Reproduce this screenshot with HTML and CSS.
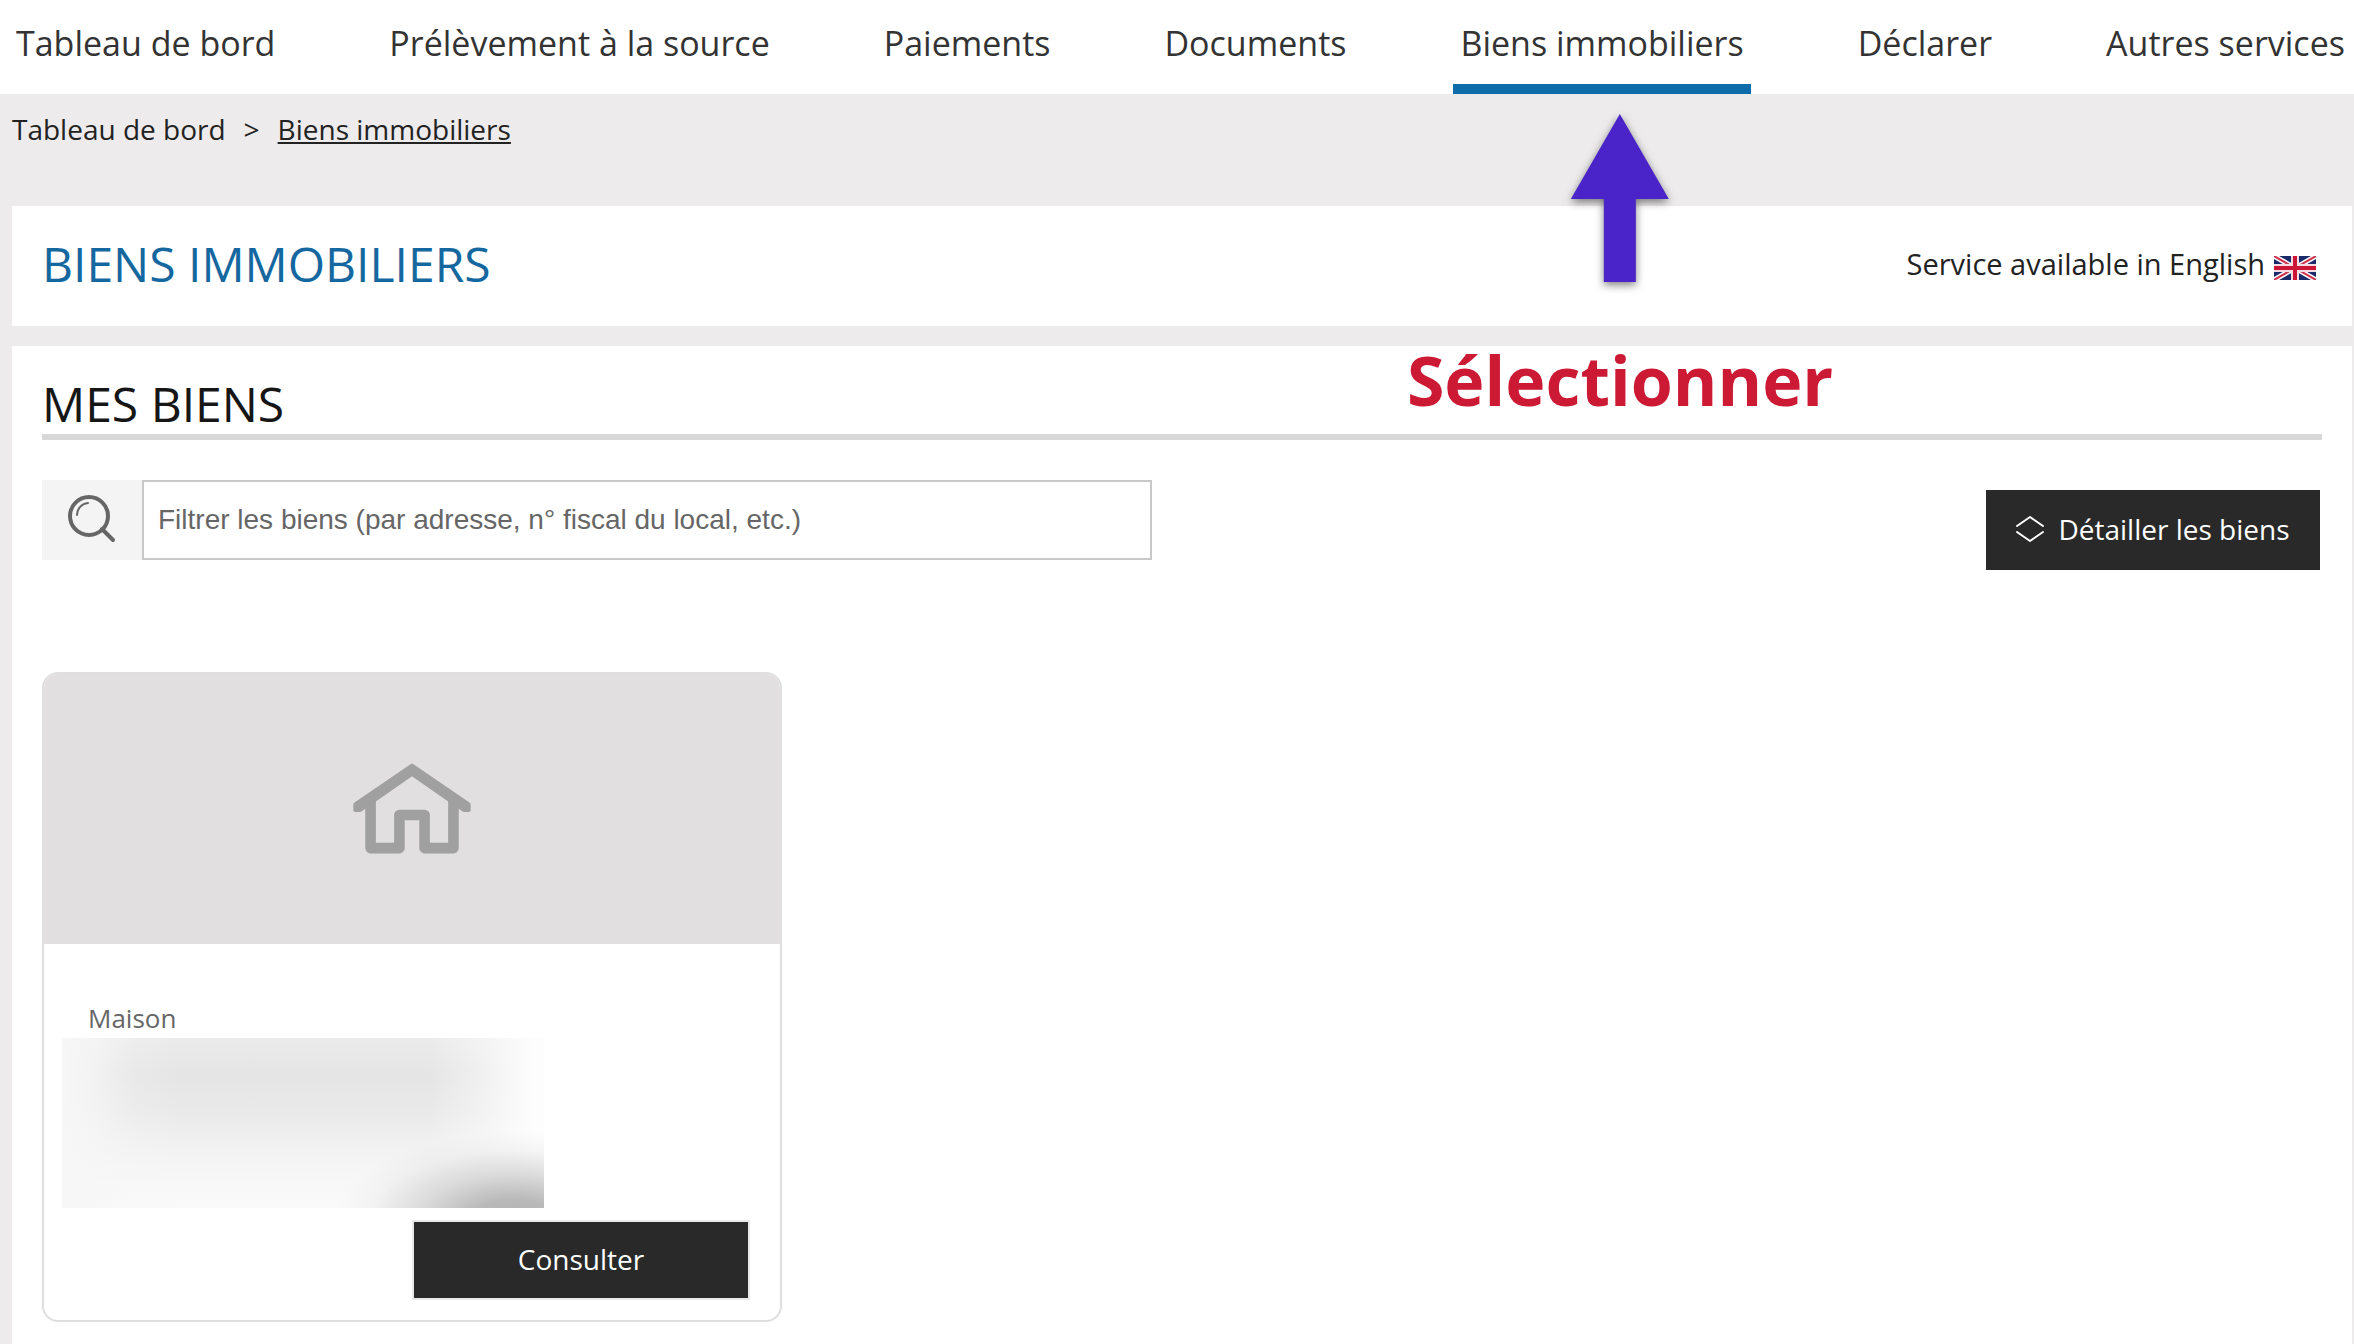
FILE: index.html
```html
<!DOCTYPE html>
<html lang="fr">
<head>
  <meta charset="UTF-8" />
  <meta name="viewport" content="width=device-width, initial-scale=1" />
  <title>Biens immobiliers</title>
  <link rel="stylesheet" href="styles.css">
</head>
<body>

  <nav class="main-nav" aria-label="Menu principal">
    <ul>
      <li><a href="#">Tableau de bord</a></li>
      <li><a href="#">Prélèvement à la source</a></li>
      <li><a href="#">Paiements</a></li>
      <li><a href="#">Documents</a></li>
      <li class="active">
        <a href="#" aria-current="page">Biens immobiliers</a>
        <!-- Aide : flèche vers l'onglet -->
        <div class="callout">
          <svg class="callout-arrow" viewBox="0 0 98 168" aria-hidden="true">
            <path d="M49 0L98 85H65V168H33V85H0Z" fill="#4a24c8" />
          </svg>
          <span class="callout-text">Sélectionner</span>
        </div>
      </li>
      <li><a href="#">Déclarer</a></li>
      <li><a href="#">Autres services</a></li>
    </ul>
  </nav>

  <nav class="breadcrumb" aria-label="Fil d'Ariane">
    <a href="#">Tableau de bord</a>
    <span>&gt;</span>
    <a href="#" class="current">Biens immobiliers</a>
  </nav>

  <main>
    <header class="panel page-header">
      <h1>BIENS IMMOBILIERS</h1>
      <a href="#" class="lang-link">
        Service available in English
        <svg class="flag" viewBox="0 0 42 24" aria-hidden="true">
          <rect width="42" height="24" fill="#1b2a6b" />
          <path d="M0 0L42 24M42 0L0 24" stroke="#fff" stroke-width="5" />
          <path d="M0 0L42 24M42 0L0 24" stroke="#d0324f" stroke-width="2" />
          <path d="M21 0V24M0 12H42" stroke="#f6dbe2" stroke-width="8" />
          <path d="M21 0V24M0 12H42" stroke="#cc1436" stroke-width="4" />
        </svg>
      </a>
    </header>

    <section class="panel properties">
      <h2>MES BIENS</h2>

      <div class="toolbar">
        <div class="search">
          <label for="filter" aria-label="Filtrer les biens">
            <svg class="search-icon" viewBox="0 0 48 48" fill="none" stroke="#666" stroke-linecap="round" aria-hidden="true">
              <circle cx="21" cy="20" r="19" stroke-width="4" />
              <path d="M34 33L45 44" stroke-width="4" />
              <path d="M9 19A12 12 0 0 1 20 7" stroke-width="2" />
            </svg>
          </label>
          <input type="text" id="filter" placeholder="Filtrer les biens (par adresse, n° fiscal du local, etc.)" />
        </div>
        <button type="button" class="btn btn-detail">
          <svg viewBox="0 0 28 26" fill="none" stroke="#fff" stroke-width="2" stroke-linecap="round" stroke-linejoin="round" aria-hidden="true">
            <path d="M1 10L14 1L27 10M1 16L14 25L27 16" />
          </svg>
          Détailler les biens
        </button>
      </div>

      <article class="card">
        <div class="card-image">
          <svg viewBox="68 68 356 274" aria-hidden="true">
            <g fill="none" stroke="#a0a0a0" stroke-width="32" stroke-linejoin="round">
              <path d="M121 165V323H208V223H284V323H371V165" />
            </g>
            <path d="M246 74L417 191V208H402L246 99L90 208H75V191Z" fill="#a0a0a0" stroke="#a0a0a0" stroke-width="12" stroke-linejoin="round" />
          </svg>
        </div>
        <div class="card-body">
          <p class="card-type">Maison</p>
          <div class="card-address"></div>
          <button type="button" class="btn btn-view">Consulter</button>
        </div>
      </article>
    </section>
  </main>

</body>
</html>
```
FILE: styles.css
```css
* {
  box-sizing: border-box;
}
body {
  margin: 0;
  min-height: 100vh;
  display: flex;
  flex-direction: column;
  background: #edebec;
  color: #222;
  font-family: "Open Sans", "Noto Sans", sans-serif;
  font-size: 28px;
  line-height: 40px;
}
a {
  color: inherit;
  text-decoration: none;
}
h1, h2 {
  margin: 0;
  font-size: 48px;
  font-weight: 400;
  line-height: 64px;
}

/* Menu principal */
.main-nav {
  background: #fff;
}
.main-nav ul {
  display: flex;
  justify-content: space-between;
  list-style: none;
  margin: 0;
  padding: 0 2px 0 9px;
}
.main-nav li {
  position: relative;
}
.main-nav a {
  display: block;
  height: 94px;
  padding: 19px 7px 0;
  border-bottom: 10px solid transparent;
  color: #333;
  font-size: 34px;
  line-height: 48px;
  white-space: nowrap;
}
.main-nav .active a {
  border-color: #0f6cab;
}

/* Aide */
.callout {
  position: absolute;
  top: 114px;
  left: 50%;
  margin-left: 18px;
  transform: translateX(-50%);
  display: flex;
  flex-direction: column;
  align-items: center;
  gap: 54px;
  pointer-events: none;
}
.callout-arrow {
  width: 98px;
  height: 168px;
  overflow: visible;
  filter: drop-shadow(0 3px 4px rgba(0,0,0,0.5));
}
.callout-text {
  color: #cc1a35;
  font-size: 68px;
  font-weight: 700;
  line-height: 88px;
  -webkit-text-stroke: 12px #fff;
  paint-order: stroke fill;
}

/* Fil d'Ariane */
.breadcrumb {
  display: flex;
  gap: 18px;
  padding: 15px 12px 57px;
}
.breadcrumb .current {
  text-decoration: underline;
}

/* Contenu */
main {
  flex: 1;
  display: flex;
  flex-direction: column;
  gap: 20px;
  padding: 0 2px 0 12px;
}
.panel {
  background: #fff;
  padding: 26px 30px 30px;
}
.page-header {
  display: flex;
  justify-content: space-between;
  align-items: center;
  padding-right: 36px;
}
.page-header h1 {
  color: #15689f;
}
.lang-link {
  display: flex;
  align-items: center;
  gap: 9px;
  font-size: 29px;
}
.flag {
  width: 42px;
  height: 24px;
  margin-top: 8px;
}
.properties {
  flex: 1;
  padding: 26px 30px 22px;
}
.properties h2 {
  color: #161616;
  height: 68px;
  border-bottom: 6px solid #d8d8d8;
}
.toolbar {
  display: flex;
  justify-content: space-between;
  gap: 40px;
  padding: 40px 2px 0 0;
}
.search {
  display: flex;
  flex: 0 1 1110px;
  height: 80px;
}
.search label {
  flex: none;
  display: flex;
  align-items: center;
  justify-content: center;
  width: 100px;
  background: #f4f4f4;
}
.search-icon {
  width: 48px;
  height: 48px;
  overflow: visible;
}
.search input {
  flex: 1;
  min-width: 0;
  padding: 0 14px;
  border: 2px solid #c8c8c8;
  background: #fff;
  font-family: "Liberation Sans", Arial, sans-serif;
  font-size: 28px;
}
.search input::placeholder {
  color: #666;
  opacity: 1;
}

/* Boutons */
.btn {
  display: flex;
  align-items: center;
  justify-content: center;
  gap: 14px;
  width: 334px;
  height: 80px;
  padding: 0 0 2px;
  border: none;
  background: #292929;
  color: #fff;
  font: inherit;
  cursor: pointer;
}
.btn-detail {
  flex: none;
  margin-top: 10px;
}
.btn-detail svg {
  width: 28px;
  height: 26px;
}
.btn-view {
  width: 338px;
  border: 2px solid #e8e8e8;
  margin-left: auto;
}

/* Carte d'un bien */
.card {
  max-width: 740px;
  margin-top: 102px;
  border: 2px solid #dfdfdf;
  border-radius: 16px;
  overflow: hidden;
}
.card-image {
  display: flex;
  align-items: center;
  justify-content: center;
  height: 270px;
  background: #e1dfe0;
}
.card-image svg {
  width: 118px;
  height: 92px;
}
.card-body {
  padding: 54px 30px 20px 18px;
}
.card-type {
  margin: 0;
  padding-left: 26px;
  color: #666;
  font-size: 26px;
}
.card-address {
  max-width: 482px;
  height: 170px;
  margin-bottom: 12px;
  background:
    radial-gradient(ellipse 180px 90px at 94% 108%, #b0b0b0 0%, rgba(178,178,178,0.9) 25%, rgba(185,185,185,0.5) 52%, rgba(200,200,200,0.15) 80%, rgba(210,210,210,0) 100%),
    linear-gradient(90deg, #f7f7f7 0%, rgba(247,247,247,0.7) 7%, rgba(247,247,247,0.2) 15%, rgba(247,247,247,0) 24%, rgba(253,253,253,0) 76%, rgba(253,253,253,0.4) 86%, #fdfdfd 98%),
    linear-gradient(#ebebeb 0%, #e5e5e5 22%, #e9e9e9 42%, #f0f0f0 60%, #f6f6f6 78%, #fafafa 100%);
}
```
